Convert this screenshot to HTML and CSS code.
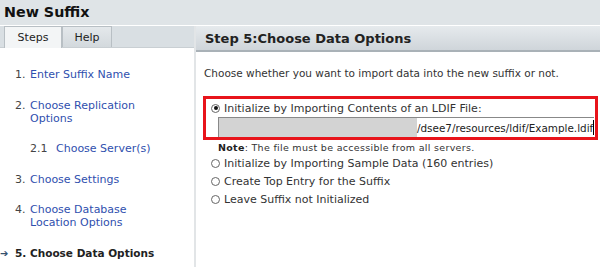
FILE: index.html
```html
<!DOCTYPE html>
<html lang="en">
<head>
  <meta charset="UTF-8" />
  <title>New Suffix</title>
  <link rel="stylesheet" href="styles.css">
</head>
<body>

<!-- Title -->
<div class="titlebar">New Suffix</div>

<div class="wizard">
  <!-- Steps panel -->
  <div class="side">
    <div class="tabs">
      <span class="tab active">Steps</span>
      <span class="tab">Help</span>
    </div>
    <ol class="steps">
      <li><span class="num">1.</span><a href="#">Enter Suffix Name</a></li>
      <li><span class="num">2.</span><a href="#">Choose Replication<br>Options</a></li>
      <li class="sub"><span class="num">2.1</span><a href="#">Choose Server(s)</a></li>
      <li><span class="num">3.</span><a href="#">Choose Settings</a></li>
      <li><span class="num">4.</span><a href="#">Choose Database<br>Location Options</a></li>
      <li class="current"><span class="arrow">&#10132;</span><span class="num">5.</span>Choose Data Options</li>
    </ol>
  </div>

  <!-- Step content -->
  <div class="main">
    <div class="step-head">Step 5:Choose Data Options</div>
    <div class="step-body">
      <p class="intro">Choose whether you want to import data into the new suffix or not.</p>
      <div class="highlight">
        <label class="opt"><span class="radio on"></span>Initialize by Importing Contents of an LDIF File:</label>
        <div class="path"><span class="blank"></span><span class="path-text">/dsee7/resources/ldif/Example.ldif</span><span class="caret"></span></div>
      </div>
      <p class="note"><b>Note</b>: The file must be accessible from all servers.</p>
      <label class="opt out"><span class="radio"></span>Initialize by Importing Sample Data (160 entries)</label>
      <label class="opt out"><span class="radio"></span>Create Top Entry for the Suffix</label>
      <label class="opt out"><span class="radio"></span>Leave Suffix not Initialized</label>
    </div>
  </div>
</div>

</body>
</html>
```
FILE: styles.css
```css
* { box-sizing: border-box; }
body {
  margin: 0;
  font-family: 'DejaVu Sans', sans-serif;
  font-size: 10px;
  color: #333;
  background: #fff;
  width: 600px;
  height: 267px;
  overflow: hidden;
}

.titlebar {
  height: 26px;
  background: #dfe4e7;
  border-bottom: 1px solid #fff;
  padding: 4px 0 0 4px;
  font-size: 14.3px;
  font-weight: bold;
  color: #111;
}

.wizard {
  display: flex;
  height: 241px;
}

.side {
  width: 196px;
  flex-shrink: 0;
  border-right: 2px solid #e2e5e7;
  display: flex;
  flex-direction: column;
}

.tabs {
  height: 27px;
  background: #d9dfe3;
  display: flex;
  align-items: flex-end;
  padding-left: 4px;
  border-bottom: 1px solid #c9cfd3;
}

.tab {
  height: 21px;
  padding: 4px 0 0;
  text-align: center;
  font-size: 11px;
  color: #222;
  border: 1px solid #b8bfc4;
  border-bottom: none;
  background: linear-gradient(#e4e8eb, #d3d9dd);
}

.tab.active {
  width: 58px;
  background: #f3f5f6;
  margin-bottom: -1px;
  height: 22px;
}

.tab + .tab {
  width: 50px;
}

.steps {
  list-style: none;
  margin: 0;
  padding: 20px 0 0;
  flex: 1;
}

.steps li {
  display: flex;
  font-size: 11px;
  line-height: 13px;
  margin-bottom: 17.6px;
  padding-left: 15px;
  color: #444;
}

.steps .num {
  width: 15px;
}

.steps a {
  color: #2f4fae;
  text-decoration: none;
}

.steps li.sub {
  padding-left: 30px;
}

.steps li.sub .num {
  width: 26px;
}

.steps li.current {
  font-weight: bold;
  font-size: 10.5px;
  color: #222;
  padding-left: 0;
}

.arrow {
  width: 15px;
  color: #34506e;
  font-size: 10px;
}

.main {
  flex: 1;
  display: flex;
  flex-direction: column;
}

.step-head {
  height: 26px;
  background: linear-gradient(#e6eaed, #cfd5da);
  border-bottom: 2px solid #a9b1b7;
  padding: 5px 0 0 9px;
  font-size: 13px;
  font-weight: bold;
  color: #222;
}

.step-body {
  padding: 15px 0 0 7px;
}

.intro {
  margin: 0 0 17px 1px;
  font-size: 10.5px;
}

.highlight {
  border: 3px solid #e8141b;
  margin-right: 2px;
  padding: 0 1px 0 5px;
}

.opt {
  display: flex;
  align-items: center;
  font-size: 11px;
  height: 18px;
  color: #333;
}

.opt.out {
  padding-left: 8px;
}

.radio {
  width: 9px;
  height: 9px;
  border: 1px solid #666;
  border-radius: 50%;
  margin-right: 4px;
  background: #fff;
  position: relative;
}

.radio.on::after {
  content: "";
  position: absolute;
  left: 1.5px;
  top: 1.5px;
  width: 4px;
  height: 4px;
  border-radius: 50%;
  background: #111;
}

.path {
  display: flex;
  height: 20px;
  margin-left: 7px;
  border-top: 1px solid #888;
  border-left: 1px solid #888;
  font-size: 10.4px;
  align-items: center;
}

.blank {
  width: 198px;
  height: 100%;
  background: #d3d3d3;
}

.path-text {
  color: #222;
}

.caret {
  width: 1px;
  height: 15px;
  background: #000;
}

.note {
  margin: 2px 0 1px 15px;
  font-size: 9.5px;
  letter-spacing: 0.3px;
}

.note b {
  color: #222;
}
```
